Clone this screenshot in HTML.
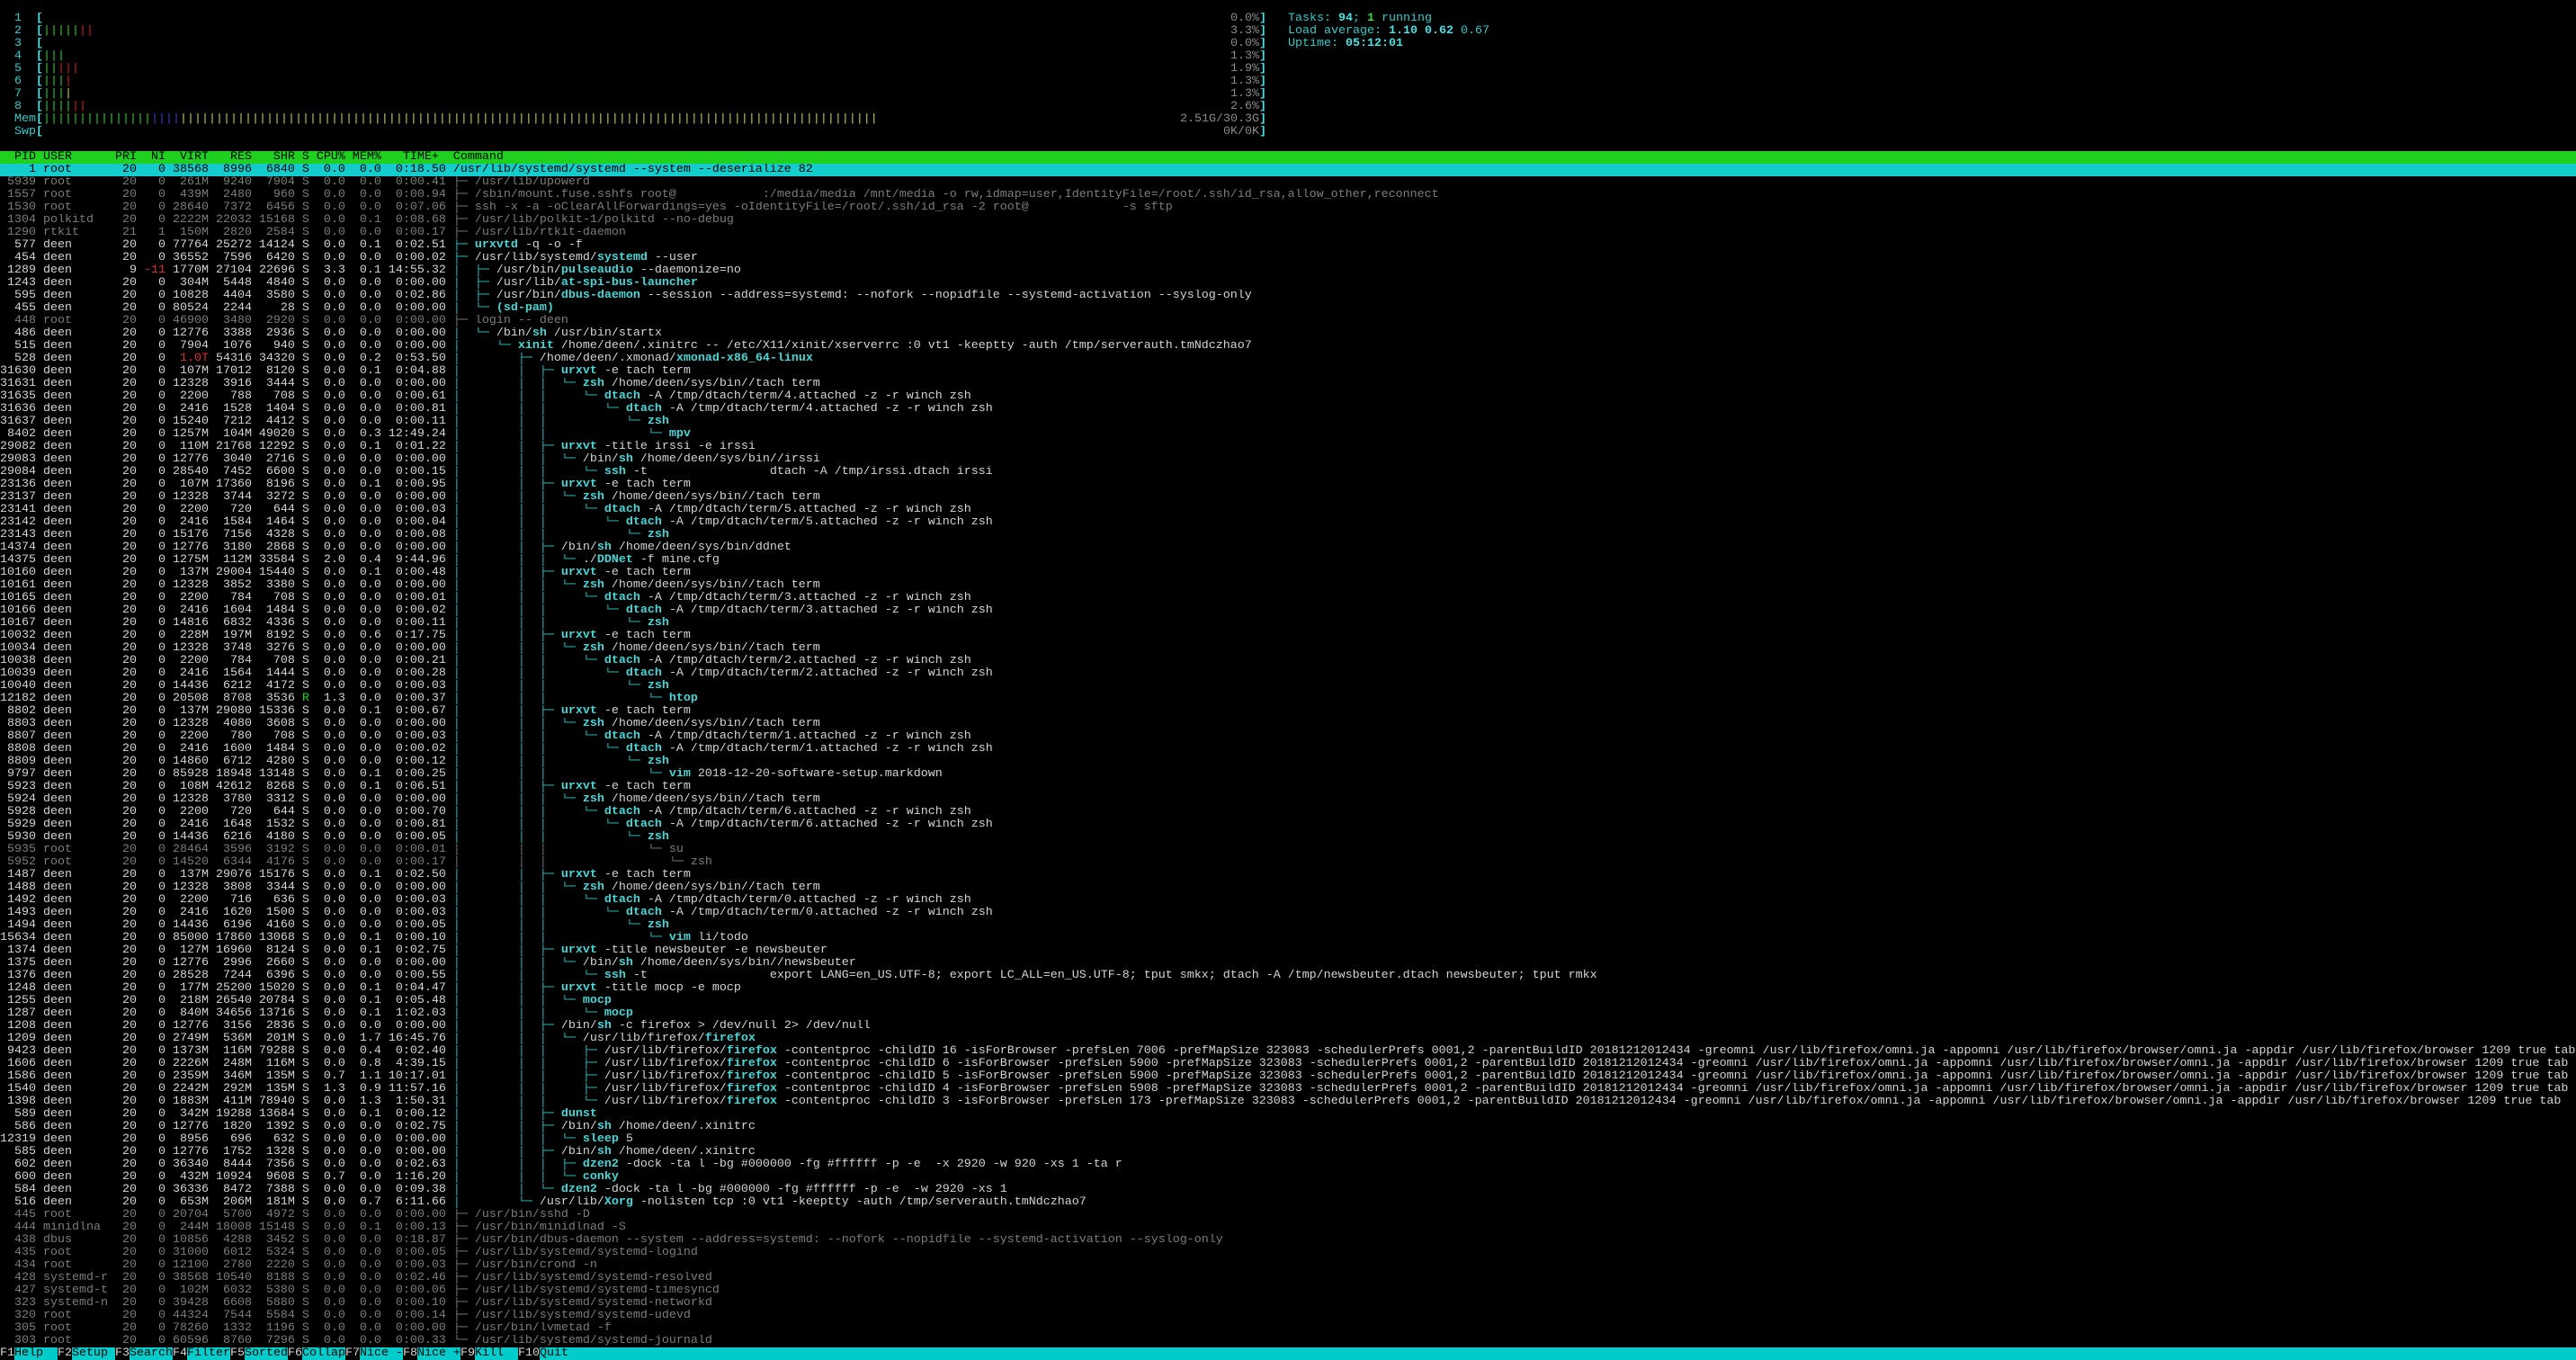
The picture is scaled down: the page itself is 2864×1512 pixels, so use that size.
<!DOCTYPE html>
<html><head><meta charset="utf-8"><style>
body{margin:0;background:#000;width:2864px;height:1512px;overflow:hidden;font-family:"Liberation Mono","DejaVu Sans Mono",monospace;font-size:13.333px;line-height:14px;color:#d4d4d4}
.l{position:relative;height:14px;white-space:pre;overflow:hidden}
.g{color:#7c7c7c}
i{font-style:normal;color:#30c4c4}
b{color:#4ad6d6}
.g i,.g b{color:#7c7c7c;font-weight:normal}
.hd{background:#1fd01f;color:#000}
.sel{background:#14cccc;color:#000}
.fb{background:#00cccc;color:#000}
.fk{background:#000;color:#d8d8d8}
.gr{color:#2ccf2c}.rd{color:#cc2222}.bl{color:#3a3ad8}.ye{color:#c8c858}
.c{color:#38c8c8}.br{color:#4ee0e0;font-weight:bold}.pc{color:#8c8c8c}.gn{color:#3ad83a;font-weight:bold}
.a{position:absolute;top:0}
.rt{position:absolute;top:0;right:1456px}
.r{color:#d83030}
</style></head><body>
<div class="l"> </div>
<div class="l"><span class="c">  1  </span><span class="br">[</span><span class="rt"><span class="pc">0.0%</span><span class="br">]</span></span><span class="a c" style="left:1432px">Tasks: <span class="br">94</span>; <span class="gn">1</span> running</span></div>
<div class="l"><span class="c">  2  </span><span class="br">[</span><span class="gr">|||||</span><span class="rd">||</span><span class="rt"><span class="pc">3.3%</span><span class="br">]</span></span><span class="a c" style="left:1432px">Load average: <span class="br">1.10</span> <span class="br">0.62</span> 0.67</span></div>
<div class="l"><span class="c">  3  </span><span class="br">[</span><span class="rt"><span class="pc">0.0%</span><span class="br">]</span></span><span class="a c" style="left:1432px">Uptime: <span class="br">05:12:01</span></span></div>
<div class="l"><span class="c">  4  </span><span class="br">[</span><span class="gr">|||</span><span class="rt"><span class="pc">1.3%</span><span class="br">]</span></span></div>
<div class="l"><span class="c">  5  </span><span class="br">[</span><span class="gr">||</span><span class="rd">|||</span><span class="rt"><span class="pc">1.9%</span><span class="br">]</span></span></div>
<div class="l"><span class="c">  6  </span><span class="br">[</span><span class="gr">|||</span><span class="rd">|</span><span class="rt"><span class="pc">1.3%</span><span class="br">]</span></span></div>
<div class="l"><span class="c">  7  </span><span class="br">[</span><span class="gr">|||</span><span class="ye">|</span><span class="rt"><span class="pc">1.3%</span><span class="br">]</span></span></div>
<div class="l"><span class="c">  8  </span><span class="br">[</span><span class="gr">||||</span><span class="rd">||</span><span class="rt"><span class="pc">2.6%</span><span class="br">]</span></span></div>
<div class="l"><span class="c">  Mem</span><span class="br">[</span><span class="gr">|||||||||||||||</span><span class="bl">||||</span><span class="ye">|||||||||||||||||||||||||||||||||||||||||||||||||||||||||||||||||||||||||||||||||||||||||||||||||</span><span class="rt"><span class="pc">2.51G/30.3G</span><span class="br">]</span></span></div>
<div class="l"><span class="c">  Swp</span><span class="br">[</span><span class="rt"><span class="pc">0K/0K</span><span class="br">]</span></span></div>
<div class="l"> </div>
<div class="l hd">  PID USER      PRI  NI  VIRT   RES   SHR S CPU% MEM%   TIME+  Command</div>
<div class="l sel">    1 root       20   0 38568  8996  6840 S  0.0  0.0  0:18.50 /usr/lib/systemd/systemd --system --deserialize 82</div>
<div class="l g"> 5939 root       20   0  261M  9240  7904 S  0.0  0.0  0:00.41 <i>├─ </i>/usr/lib/upowerd</div>
<div class="l g"> 1557 root       20   0  439M  2480   960 S  0.0  0.0  0:00.94 <i>├─ </i>/sbin/mount.fuse.sshfs root@            :/media/media /mnt/media -o rw,idmap=user,IdentityFile=/root/.ssh/id_rsa,allow_other,reconnect</div>
<div class="l g"> 1530 root       20   0 28640  7372  6456 S  0.0  0.0  0:07.06 <i>├─ </i>ssh -x -a -oClearAllForwardings=yes -oIdentityFile=/root/.ssh/id_rsa -2 root@             -s sftp</div>
<div class="l g"> 1304 polkitd    20   0 2222M 22032 15168 S  0.0  0.1  0:08.68 <i>├─ </i>/usr/lib/polkit-1/polkitd --no-debug</div>
<div class="l g"> 1290 rtkit      21   1  150M  2820  2584 S  0.0  0.0  0:00.17 <i>├─ </i>/usr/lib/rtkit-daemon</div>
<div class="l">  577 deen       20   0 77764 25272 14124 S  0.0  0.1  0:02.51 <i>├─ </i><b>urxvtd</b> -q -o -f</div>
<div class="l">  454 deen       20   0 36552  7596  6420 S  0.0  0.0  0:00.02 <i>├─ </i>/usr/lib/systemd/<b>systemd</b> --user</div>
<div class="l"> 1289 deen        9 <span class="r">-11</span> 1770M 27104 22696 S  3.3  0.1 14:55.32 <i>│  ├─ </i>/usr/bin/<b>pulseaudio</b> --daemonize=no</div>
<div class="l"> 1243 deen       20   0  304M  5448  4840 S  0.0  0.0  0:00.00 <i>│  ├─ </i>/usr/lib/<b>at-spi-bus-launcher</b></div>
<div class="l">  595 deen       20   0 10828  4404  3580 S  0.0  0.0  0:02.86 <i>│  ├─ </i>/usr/bin/<b>dbus-daemon</b> --session --address=systemd: --nofork --nopidfile --systemd-activation --syslog-only</div>
<div class="l">  455 deen       20   0 80524  2244    28 S  0.0  0.0  0:00.00 <i>│  └─ </i><b>(sd-pam)</b></div>
<div class="l g">  448 root       20   0 46900  3480  2920 S  0.0  0.0  0:00.00 <i>├─ </i>login -- deen</div>
<div class="l">  486 deen       20   0 12776  3388  2936 S  0.0  0.0  0:00.00 <i>│  └─ </i>/bin/<b>sh</b> /usr/bin/startx</div>
<div class="l">  515 deen       20   0  7904  1076   940 S  0.0  0.0  0:00.00 <i>│     └─ </i><b>xinit</b> /home/deen/.xinitrc -- /etc/X11/xinit/xserverrc :0 vt1 -keeptty -auth /tmp/serverauth.tmNdczhao7</div>
<div class="l">  528 deen       20   0  <span class="r">1.0T</span> 54316 34320 S  0.0  0.2  0:53.50 <i>│        ├─ </i>/home/deen/.xmonad/<b>xmonad-x86_64-linux</b></div>
<div class="l">31630 deen       20   0  107M 17012  8120 S  0.0  0.1  0:04.88 <i>│        │  ├─ </i><b>urxvt</b> -e tach term</div>
<div class="l">31631 deen       20   0 12328  3916  3444 S  0.0  0.0  0:00.00 <i>│        │  │  └─ </i><b>zsh</b> /home/deen/sys/bin//tach term</div>
<div class="l">31635 deen       20   0  2200   788   708 S  0.0  0.0  0:00.61 <i>│        │  │     └─ </i><b>dtach</b> -A /tmp/dtach/term/4.attached -z -r winch zsh</div>
<div class="l">31636 deen       20   0  2416  1528  1404 S  0.0  0.0  0:00.81 <i>│        │  │        └─ </i><b>dtach</b> -A /tmp/dtach/term/4.attached -z -r winch zsh</div>
<div class="l">31637 deen       20   0 15240  7212  4412 S  0.0  0.0  0:00.11 <i>│        │  │           └─ </i><b>zsh</b></div>
<div class="l"> 8402 deen       20   0 1257M  104M 49020 S  0.0  0.3 12:49.24 <i>│        │  │              └─ </i><b>mpv</b></div>
<div class="l">29082 deen       20   0  110M 21768 12292 S  0.0  0.1  0:01.22 <i>│        │  ├─ </i><b>urxvt</b> -title irssi -e irssi</div>
<div class="l">29083 deen       20   0 12776  3040  2716 S  0.0  0.0  0:00.00 <i>│        │  │  └─ </i>/bin/<b>sh</b> /home/deen/sys/bin//irssi</div>
<div class="l">29084 deen       20   0 28540  7452  6600 S  0.0  0.0  0:00.15 <i>│        │  │     └─ </i><b>ssh</b> -t                 dtach -A /tmp/irssi.dtach irssi</div>
<div class="l">23136 deen       20   0  107M 17360  8196 S  0.0  0.1  0:00.95 <i>│        │  ├─ </i><b>urxvt</b> -e tach term</div>
<div class="l">23137 deen       20   0 12328  3744  3272 S  0.0  0.0  0:00.00 <i>│        │  │  └─ </i><b>zsh</b> /home/deen/sys/bin//tach term</div>
<div class="l">23141 deen       20   0  2200   720   644 S  0.0  0.0  0:00.03 <i>│        │  │     └─ </i><b>dtach</b> -A /tmp/dtach/term/5.attached -z -r winch zsh</div>
<div class="l">23142 deen       20   0  2416  1584  1464 S  0.0  0.0  0:00.04 <i>│        │  │        └─ </i><b>dtach</b> -A /tmp/dtach/term/5.attached -z -r winch zsh</div>
<div class="l">23143 deen       20   0 15176  7156  4328 S  0.0  0.0  0:00.08 <i>│        │  │           └─ </i><b>zsh</b></div>
<div class="l">14374 deen       20   0 12776  3180  2868 S  0.0  0.0  0:00.00 <i>│        │  ├─ </i>/bin/<b>sh</b> /home/deen/sys/bin/ddnet</div>
<div class="l">14375 deen       20   0 1275M  112M 33584 S  2.0  0.4  9:44.96 <i>│        │  │  └─ </i>./<b>DDNet</b> -f mine.cfg</div>
<div class="l">10160 deen       20   0  137M 29004 15440 S  0.0  0.1  0:00.48 <i>│        │  ├─ </i><b>urxvt</b> -e tach term</div>
<div class="l">10161 deen       20   0 12328  3852  3380 S  0.0  0.0  0:00.00 <i>│        │  │  └─ </i><b>zsh</b> /home/deen/sys/bin//tach term</div>
<div class="l">10165 deen       20   0  2200   784   708 S  0.0  0.0  0:00.01 <i>│        │  │     └─ </i><b>dtach</b> -A /tmp/dtach/term/3.attached -z -r winch zsh</div>
<div class="l">10166 deen       20   0  2416  1604  1484 S  0.0  0.0  0:00.02 <i>│        │  │        └─ </i><b>dtach</b> -A /tmp/dtach/term/3.attached -z -r winch zsh</div>
<div class="l">10167 deen       20   0 14816  6832  4336 S  0.0  0.0  0:00.11 <i>│        │  │           └─ </i><b>zsh</b></div>
<div class="l">10032 deen       20   0  228M  197M  8192 S  0.0  0.6  0:17.75 <i>│        │  ├─ </i><b>urxvt</b> -e tach term</div>
<div class="l">10034 deen       20   0 12328  3748  3276 S  0.0  0.0  0:00.00 <i>│        │  │  └─ </i><b>zsh</b> /home/deen/sys/bin//tach term</div>
<div class="l">10038 deen       20   0  2200   784   708 S  0.0  0.0  0:00.21 <i>│        │  │     └─ </i><b>dtach</b> -A /tmp/dtach/term/2.attached -z -r winch zsh</div>
<div class="l">10039 deen       20   0  2416  1564  1444 S  0.0  0.0  0:00.28 <i>│        │  │        └─ </i><b>dtach</b> -A /tmp/dtach/term/2.attached -z -r winch zsh</div>
<div class="l">10040 deen       20   0 14436  6212  4172 S  0.0  0.0  0:00.03 <i>│        │  │           └─ </i><b>zsh</b></div>
<div class="l">12182 deen       20   0 20508  8708  3536 <span class="gr">R</span>  1.3  0.0  0:00.37 <i>│        │  │              └─ </i><b>htop</b></div>
<div class="l"> 8802 deen       20   0  137M 29080 15336 S  0.0  0.1  0:00.67 <i>│        │  ├─ </i><b>urxvt</b> -e tach term</div>
<div class="l"> 8803 deen       20   0 12328  4080  3608 S  0.0  0.0  0:00.00 <i>│        │  │  └─ </i><b>zsh</b> /home/deen/sys/bin//tach term</div>
<div class="l"> 8807 deen       20   0  2200   780   708 S  0.0  0.0  0:00.03 <i>│        │  │     └─ </i><b>dtach</b> -A /tmp/dtach/term/1.attached -z -r winch zsh</div>
<div class="l"> 8808 deen       20   0  2416  1600  1484 S  0.0  0.0  0:00.02 <i>│        │  │        └─ </i><b>dtach</b> -A /tmp/dtach/term/1.attached -z -r winch zsh</div>
<div class="l"> 8809 deen       20   0 14860  6712  4280 S  0.0  0.0  0:00.12 <i>│        │  │           └─ </i><b>zsh</b></div>
<div class="l"> 9797 deen       20   0 85928 18948 13148 S  0.0  0.1  0:00.25 <i>│        │  │              └─ </i><b>vim</b> 2018-12-20-software-setup.markdown</div>
<div class="l"> 5923 deen       20   0  108M 42612  8268 S  0.0  0.1  0:06.51 <i>│        │  ├─ </i><b>urxvt</b> -e tach term</div>
<div class="l"> 5924 deen       20   0 12328  3780  3312 S  0.0  0.0  0:00.00 <i>│        │  │  └─ </i><b>zsh</b> /home/deen/sys/bin//tach term</div>
<div class="l"> 5928 deen       20   0  2200   720   644 S  0.0  0.0  0:00.70 <i>│        │  │     └─ </i><b>dtach</b> -A /tmp/dtach/term/6.attached -z -r winch zsh</div>
<div class="l"> 5929 deen       20   0  2416  1648  1532 S  0.0  0.0  0:00.81 <i>│        │  │        └─ </i><b>dtach</b> -A /tmp/dtach/term/6.attached -z -r winch zsh</div>
<div class="l"> 5930 deen       20   0 14436  6216  4180 S  0.0  0.0  0:00.05 <i>│        │  │           └─ </i><b>zsh</b></div>
<div class="l g"> 5935 root       20   0 28464  3596  3192 S  0.0  0.0  0:00.01 <i>│        │  │              └─ </i>su</div>
<div class="l g"> 5952 root       20   0 14520  6344  4176 S  0.0  0.0  0:00.17 <i>│        │  │                 └─ </i>zsh</div>
<div class="l"> 1487 deen       20   0  137M 29076 15176 S  0.0  0.1  0:02.50 <i>│        │  ├─ </i><b>urxvt</b> -e tach term</div>
<div class="l"> 1488 deen       20   0 12328  3808  3344 S  0.0  0.0  0:00.00 <i>│        │  │  └─ </i><b>zsh</b> /home/deen/sys/bin//tach term</div>
<div class="l"> 1492 deen       20   0  2200   716   636 S  0.0  0.0  0:00.03 <i>│        │  │     └─ </i><b>dtach</b> -A /tmp/dtach/term/0.attached -z -r winch zsh</div>
<div class="l"> 1493 deen       20   0  2416  1620  1500 S  0.0  0.0  0:00.03 <i>│        │  │        └─ </i><b>dtach</b> -A /tmp/dtach/term/0.attached -z -r winch zsh</div>
<div class="l"> 1494 deen       20   0 14436  6196  4160 S  0.0  0.0  0:00.05 <i>│        │  │           └─ </i><b>zsh</b></div>
<div class="l">15634 deen       20   0 85000 17860 13068 S  0.0  0.1  0:00.10 <i>│        │  │              └─ </i><b>vim</b> li/todo</div>
<div class="l"> 1374 deen       20   0  127M 16960  8124 S  0.0  0.1  0:02.75 <i>│        │  ├─ </i><b>urxvt</b> -title newsbeuter -e newsbeuter</div>
<div class="l"> 1375 deen       20   0 12776  2996  2660 S  0.0  0.0  0:00.00 <i>│        │  │  └─ </i>/bin/<b>sh</b> /home/deen/sys/bin//newsbeuter</div>
<div class="l"> 1376 deen       20   0 28528  7244  6396 S  0.0  0.0  0:00.55 <i>│        │  │     └─ </i><b>ssh</b> -t                 export LANG=en_US.UTF-8; export LC_ALL=en_US.UTF-8; tput smkx; dtach -A /tmp/newsbeuter.dtach newsbeuter; tput rmkx</div>
<div class="l"> 1248 deen       20   0  177M 25200 15020 S  0.0  0.1  0:04.47 <i>│        │  ├─ </i><b>urxvt</b> -title mocp -e mocp</div>
<div class="l"> 1255 deen       20   0  218M 26540 20784 S  0.0  0.1  0:05.48 <i>│        │  │  └─ </i><b>mocp</b></div>
<div class="l"> 1287 deen       20   0  840M 34656 13716 S  0.0  0.1  1:02.03 <i>│        │  │     └─ </i><b>mocp</b></div>
<div class="l"> 1208 deen       20   0 12776  3156  2836 S  0.0  0.0  0:00.00 <i>│        │  ├─ </i>/bin/<b>sh</b> -c firefox &gt; /dev/null 2&gt; /dev/null</div>
<div class="l"> 1209 deen       20   0 2749M  536M  201M S  0.0  1.7 16:45.76 <i>│        │  │  └─ </i>/usr/lib/firefox/<b>firefox</b></div>
<div class="l"> 9423 deen       20   0 1373M  116M 79288 S  0.0  0.4  0:02.40 <i>│        │  │     ├─ </i>/usr/lib/firefox/<b>firefox</b> -contentproc -childID 16 -isForBrowser -prefsLen 7006 -prefMapSize 323083 -schedulerPrefs 0001,2 -parentBuildID 20181212012434 -greomni /usr/lib/firefox/omni.ja -appomni /usr/lib/firefox/browser/omni.ja -appdir /usr/lib/firefox/browser 1209 true tab</div>
<div class="l"> 1606 deen       20   0 2226M  248M  116M S  0.0  0.8  4:39.15 <i>│        │  │     ├─ </i>/usr/lib/firefox/<b>firefox</b> -contentproc -childID 6 -isForBrowser -prefsLen 5900 -prefMapSize 323083 -schedulerPrefs 0001,2 -parentBuildID 20181212012434 -greomni /usr/lib/firefox/omni.ja -appomni /usr/lib/firefox/browser/omni.ja -appdir /usr/lib/firefox/browser 1209 true tab</div>
<div class="l"> 1586 deen       20   0 2359M  346M  135M S  0.7  1.1 10:17.01 <i>│        │  │     ├─ </i>/usr/lib/firefox/<b>firefox</b> -contentproc -childID 5 -isForBrowser -prefsLen 5900 -prefMapSize 323083 -schedulerPrefs 0001,2 -parentBuildID 20181212012434 -greomni /usr/lib/firefox/omni.ja -appomni /usr/lib/firefox/browser/omni.ja -appdir /usr/lib/firefox/browser 1209 true tab</div>
<div class="l"> 1540 deen       20   0 2242M  292M  135M S  1.3  0.9 11:57.16 <i>│        │  │     ├─ </i>/usr/lib/firefox/<b>firefox</b> -contentproc -childID 4 -isForBrowser -prefsLen 5908 -prefMapSize 323083 -schedulerPrefs 0001,2 -parentBuildID 20181212012434 -greomni /usr/lib/firefox/omni.ja -appomni /usr/lib/firefox/browser/omni.ja -appdir /usr/lib/firefox/browser 1209 true tab</div>
<div class="l"> 1398 deen       20   0 1883M  411M 78940 S  0.0  1.3  1:50.31 <i>│        │  │     └─ </i>/usr/lib/firefox/<b>firefox</b> -contentproc -childID 3 -isForBrowser -prefsLen 173 -prefMapSize 323083 -schedulerPrefs 0001,2 -parentBuildID 20181212012434 -greomni /usr/lib/firefox/omni.ja -appomni /usr/lib/firefox/browser/omni.ja -appdir /usr/lib/firefox/browser 1209 true tab</div>
<div class="l">  589 deen       20   0  342M 19288 13684 S  0.0  0.1  0:00.12 <i>│        │  ├─ </i><b>dunst</b></div>
<div class="l">  586 deen       20   0 12776  1820  1392 S  0.0  0.0  0:02.75 <i>│        │  ├─ </i>/bin/<b>sh</b> /home/deen/.xinitrc</div>
<div class="l">12319 deen       20   0  8956   696   632 S  0.0  0.0  0:00.00 <i>│        │  │  └─ </i><b>sleep</b> 5</div>
<div class="l">  585 deen       20   0 12776  1752  1328 S  0.0  0.0  0:00.00 <i>│        │  ├─ </i>/bin/<b>sh</b> /home/deen/.xinitrc</div>
<div class="l">  602 deen       20   0 36340  8444  7356 S  0.0  0.0  0:02.63 <i>│        │  │  ├─ </i><b>dzen2</b> -dock -ta l -bg #000000 -fg #ffffff -p -e  -x 2920 -w 920 -xs 1 -ta r</div>
<div class="l">  600 deen       20   0  432M 10924  9608 S  0.7  0.0  1:16.20 <i>│        │  │  └─ </i><b>conky</b></div>
<div class="l">  584 deen       20   0 36336  8472  7388 S  0.0  0.0  0:09.38 <i>│        │  └─ </i><b>dzen2</b> -dock -ta l -bg #000000 -fg #ffffff -p -e  -w 2920 -xs 1</div>
<div class="l">  516 deen       20   0  653M  206M  181M S  0.0  0.7  6:11.66 <i>│        └─ </i>/usr/lib/<b>Xorg</b> -nolisten tcp :0 vt1 -keeptty -auth /tmp/serverauth.tmNdczhao7</div>
<div class="l g">  445 root       20   0 20704  5700  4972 S  0.0  0.0  0:00.00 <i>├─ </i>/usr/bin/sshd -D</div>
<div class="l g">  444 minidlna   20   0  244M 18008 15148 S  0.0  0.1  0:00.13 <i>├─ </i>/usr/bin/minidlnad -S</div>
<div class="l g">  438 dbus       20   0 10856  4288  3452 S  0.0  0.0  0:18.87 <i>├─ </i>/usr/bin/dbus-daemon --system --address=systemd: --nofork --nopidfile --systemd-activation --syslog-only</div>
<div class="l g">  435 root       20   0 31000  6012  5324 S  0.0  0.0  0:00.05 <i>├─ </i>/usr/lib/systemd/systemd-logind</div>
<div class="l g">  434 root       20   0 12100  2780  2220 S  0.0  0.0  0:00.03 <i>├─ </i>/usr/bin/crond -n</div>
<div class="l g">  428 systemd-r  20   0 38568 10540  8188 S  0.0  0.0  0:02.46 <i>├─ </i>/usr/lib/systemd/systemd-resolved</div>
<div class="l g">  427 systemd-t  20   0  102M  6032  5380 S  0.0  0.0  0:00.06 <i>├─ </i>/usr/lib/systemd/systemd-timesyncd</div>
<div class="l g">  323 systemd-n  20   0 39428  6608  5880 S  0.0  0.0  0:00.10 <i>├─ </i>/usr/lib/systemd/systemd-networkd</div>
<div class="l g">  320 root       20   0 44324  7544  5584 S  0.0  0.0  0:00.14 <i>├─ </i>/usr/lib/systemd/systemd-udevd</div>
<div class="l g">  305 root       20   0 78260  1332  1196 S  0.0  0.0  0:00.00 <i>├─ </i>/usr/bin/lvmetad -f</div>
<div class="l g">  303 root       20   0 60596  8760  7296 S  0.0  0.0  0:00.33 <i>└─ </i>/usr/lib/systemd/systemd-journald</div>
<div class="l fb"><span class="fk">F1</span>Help  <span class="fk">F2</span>Setup <span class="fk">F3</span>Search<span class="fk">F4</span>Filter<span class="fk">F5</span>Sorted<span class="fk">F6</span>Collap<span class="fk">F7</span>Nice -<span class="fk">F8</span>Nice +<span class="fk">F9</span>Kill  <span class="fk">F10</span>Quit  </div>
</body></html>
